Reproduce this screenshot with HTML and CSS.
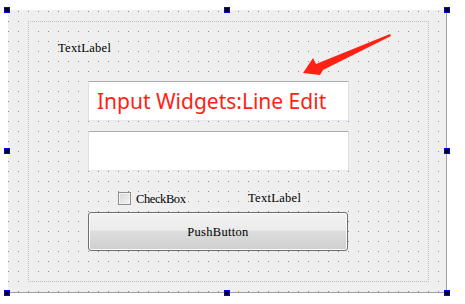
FILE: index.html
```html
<!DOCTYPE html>
<html>
<head>
<meta charset="utf-8">
<link rel="stylesheet" href="styles.css">
</head>
<body>
<div class="page">
  <div class="form">
    <div class="layout">
      <div class="label-top">TextLabel</div>
      <div class="line-edit"><span class="le-text">Input Widgets:Line Edit</span></div>
      <div class="line-edit second"></div>
      <div class="check-row">
        <div class="check-group"><span class="check-box"></span><span class="small check-label">CheckBox</span></div>
        <span class="small label-right">TextLabel</span>
      </div>
      <div class="push-button"><span class="small">PushButton</span></div>
    </div>
  </div>
  <span class="handle h-tl"></span>
  <span class="handle h-tm"></span>
  <span class="handle h-tr"></span>
  <span class="handle h-ml"></span>
  <span class="handle h-mr"></span>
  <span class="handle h-bl"></span>
  <span class="handle h-bm"></span>
  <span class="handle h-br"></span>
  <svg class="arrow" width="465" height="304" viewBox="0 0 465 304">
    <polygon points="390,34 316,64 313,58 303,73 320,75 323,70 391,36" fill="#ff2214"/>
  </svg>
</div>
</body>
</html>
```
FILE: styles.css
```css
html, body {
  margin: 0;
  padding: 0;
  background: #ffffff;
}
.page {
  position: relative;
  width: 465px;
  height: 304px;
  padding: 10px 0 0 8px;
  box-sizing: border-box;
}
.form {
  width: 418px;
  height: 271px;
  background-color: #efefef;
  background-image: conic-gradient(from 270deg at 1px 1px, #8e8e8e 90deg, transparent 0);
  background-size: 10px 10px;
  background-position: 0 1px;
  border-right: 1px solid #a0a0a0;
  border-bottom: 1px solid #a0a0a0;
  padding: 11px 0 0 20px;
  box-sizing: content-box;
}
.layout {
  width: 399px;
  height: 259px;
  border: 1px dotted #bdbdbd;
  display: flex;
  flex-direction: column;
}
.small, .label-top {
  font-family: "Liberation Serif", serif;
  font-size: 12.5px;
  letter-spacing: 0.3px;
  color: #000;
  line-height: 14px;
  white-space: nowrap;
}
.label-top {
  margin-top: 19px;
  padding-left: 29px;
  height: 14px;
}
.line-edit {
  margin-top: 26px;
  margin-left: 59px;
  width: 261px;
  height: 40px;
  box-sizing: border-box;
  background: #ffffff;
  border-top: 1px solid #abadb3;
  border-left: 1px solid #dbdfe6;
  border-right: 1px solid #dbdfe6;
  border-bottom: 1px solid #e3e9ef;
  display: flex;
  align-items: center;
  padding-left: 8px;
}
.line-edit.second {
  margin-top: 10px;
}
.le-text {
  font-family: "Noto Sans", sans-serif;
  font-size: 21px;
  color: #ff2214;
  white-space: nowrap;
  line-height: 30px;
}
.check-row {
  margin-top: 21px;
  margin-left: 89px;
  height: 13px;
  display: flex;
  align-items: center;
}
.check-group {
  width: 130px;
  display: flex;
  align-items: center;
  gap: 5px;
}
.check-label {
  letter-spacing: -0.4px;
}
.check-box {
  width: 13px;
  height: 13px;
  box-sizing: border-box;
  border: 1px solid #8f8f8f;
  background: linear-gradient(135deg, #d8d8d8, #f4f4f4);
  box-shadow: inset 0 0 0 1px #f4f4f4;
}
.label-right {
  margin-top: -2px;
}
.push-button {
  margin-top: 7px;
  margin-left: 59px;
  width: 260px;
  height: 39px;
  box-sizing: border-box;
  border: 1px solid #707070;
  border-radius: 3px;
  background: linear-gradient(#f2f2f2 0%, #ebebeb 46%, #dddddd 50%, #cfcfcf 100%);
  box-shadow: inset 0 0 0 1px #fbfbfb;
  display: flex;
  align-items: center;
  justify-content: center;
  padding-top: 1px;
}
.handle {
  position: absolute;
  width: 6px;
  height: 6px;
  box-sizing: border-box;
  border: 1px solid #0000ff;
  background: #000;
}
.h-tl { left: 4px; top: 7px; }
.h-tm { left: 224px; top: 7px; }
.h-tr { left: 444px; top: 7px; }
.h-ml { left: 4px; top: 148px; }
.h-mr { left: 444px; top: 148px; }
.h-bl { left: 4px; top: 290px; }
.h-bm { left: 224px; top: 290px; }
.h-br { left: 444px; top: 290px; }
.arrow {
  position: absolute;
  left: 0;
  top: 0;
}
```
